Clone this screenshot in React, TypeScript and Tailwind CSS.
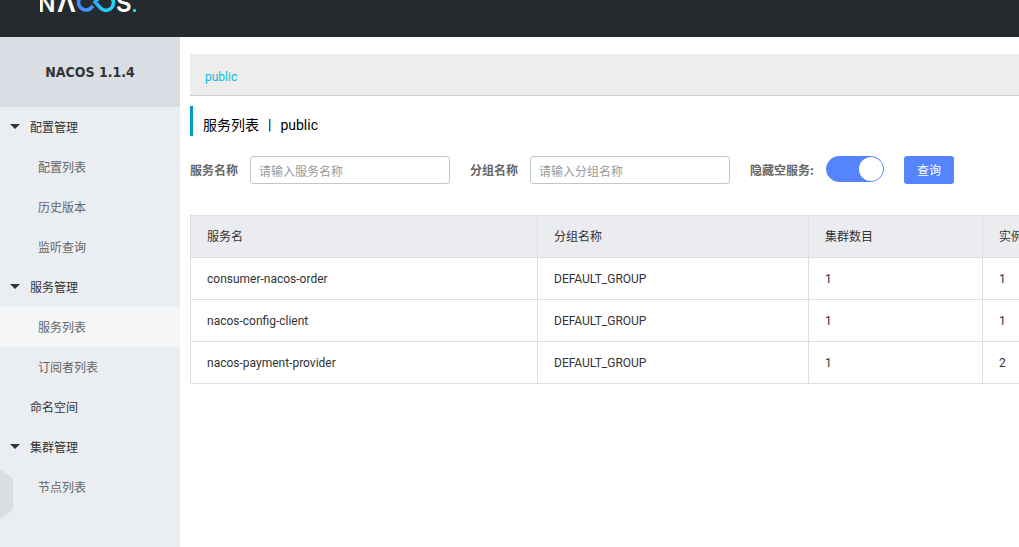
import React, { useState } from 'react';

type MenuItem = {
  title: string;
  children?: string[];
};

const menu: MenuItem[] = [
  { title: '配置管理', children: ['配置列表', '历史版本', '监听查询'] },
  { title: '服务管理', children: ['服务列表', '订阅者列表'] },
  { title: '命名空间' },
  { title: '集群管理', children: ['节点列表'] },
];

const services = [
  { name: 'consumer-nacos-order', groupName: 'DEFAULT_GROUP', clusterCount: 1, ipCount: 1 },
  { name: 'nacos-config-client', groupName: 'DEFAULT_GROUP', clusterCount: 1, ipCount: 1 },
  { name: 'nacos-payment-provider', groupName: 'DEFAULT_GROUP', clusterCount: 1, ipCount: 2 },
];

const Logo = () => (
  <svg width="100" height="14" viewBox="0 0 100 14" role="img" aria-label="NACOS">
    <defs>
      <linearGradient id="loop" gradientUnits="userSpaceOnUse" x1="36" y1="0" x2="76" y2="0">
        <stop offset="0" stopColor="#4788ff" />
        <stop offset="0.45" stopColor="#3b9cff" />
        <stop offset="0.6" stopColor="#22c4f5" />
        <stop offset="1" stopColor="#1be0f5" />
      </linearGradient>
    </defs>
    <g fill="#fff" fontFamily="Inter, sans-serif" fontWeight="600">
      <text x="-2" y="12" fontSize="23">N</text>
      <text x="17" y="12" fontSize="26">Λ</text>
      <text x="76" y="12" fontSize="24">S</text>
    </g>
    <g fill="none" stroke="url(#loop)" strokeWidth="3.6">
      <path d="M53 6 L50.500 8.500 A7.500 7.500 0 1 1 50.500 -3.500 L52 -2" />
      <path d="M61 -4.500 L55 2 L60.500 8 A7.500 7.500 0 1 0 62 -3.500" />
    </g>
    <rect x="93" y="9" width="3" height="3" rx="1" fill="#1be0f5" />
  </svg>
);

const Sidebar = () => (
  <aside className="relative w-[180px] shrink-0 bg-[#eaedf1] font-['Noto_Sans_CJK_SC',sans-serif]">
    <h1 className="flex h-[70px] items-center justify-center bg-[#d9dde4] font-['DejaVu_Sans_Condensed','DejaVu_Sans',sans-serif] text-sm font-bold text-[#333]">
      NACOS 1.1.4
    </h1>
    <nav>
      <ul>
        {menu.map((item) => (
          <li key={item.title}>
            <a href="#" className="flex h-10 items-center pl-2.5 text-[#333]">
              <span className="w-5">
                {item.children && (
                  <svg width="10" height="5" viewBox="0 0 10 5" className="mb-0.5" aria-hidden="true">
                    <path d="M0 0H10L5 5Z" fill="#333" />
                  </svg>
                )}
              </span>
              {item.title}
            </a>
            {item.children && (
              <ul>
                {item.children.map((child) => (
                  <li key={child}>
                    <a
                      href="#"
                      className={`flex h-10 items-center pl-[38px] text-[#666] ${
                        child === '服务列表' ? 'bg-[#f4f6f8]' : ''
                      }`}
                    >
                      {child}
                    </a>
                  </li>
                ))}
              </ul>
            )}
          </li>
        ))}
      </ul>
    </nav>
    {/* Collapse handle */}
    <button type="button" aria-label="收起" className="absolute bottom-7 left-0">
      <svg width="13" height="50" viewBox="0 0 13 50">
        <path d="M0 0L13 9V41L0 50Z" fill="#d9dde4" />
      </svg>
    </button>
  </aside>
);

const inputClass =
  'h-7 w-[200px] rounded-[3px] border border-[#c4c6cf] bg-white px-2 text-[#333] outline-none placeholder:text-[#999]';
const cellClass = 'h-[42px] border border-[#dcdee3] px-4 text-left font-normal whitespace-nowrap';

const App = () => {
  const [hideEmpty, setHideEmpty] = useState(true);

  return (
    <div className="flex min-h-screen flex-col overflow-hidden bg-white font-['Roboto','Noto_Sans_CJK_SC',sans-serif] text-xs text-[#333]">
      <header className="h-[37px] shrink-0 bg-[#252a2f] pl-10">
        <Logo />
      </header>

      <div className="flex grow">
        <Sidebar />

        <main className="min-w-0 grow overflow-hidden pt-[17px] pl-2.5">
          <div className="flex h-[42px] items-center border-b border-[#ccc] bg-[#ededed] pt-1 pl-[15px]">
            <a href="#" className="text-[#00c1de]">public</a>
          </div>

          <h2 className="mt-2.5 flex h-[30px] items-center gap-[9px] border-l-[3px] border-[#09c] pt-2 pl-2.5 text-sm text-black">
            <span>服务列表</span>
            <span>|</span>
            <span>public</span>
          </h2>

          <form
            className="mt-5 flex gap-5 font-['Noto_Sans_CJK_SC',sans-serif]"
            onSubmit={(e) => e.preventDefault()}
          >
            <div className="flex shrink-0 items-center gap-3">
              <label htmlFor="serviceName" className="font-bold text-[#666]">服务名称</label>
              <input id="serviceName" placeholder="请输入服务名称" className={inputClass} />
            </div>
            <div className="flex shrink-0 items-center gap-3">
              <label htmlFor="groupName" className="font-bold text-[#666]">分组名称</label>
              <input id="groupName" placeholder="请输入分组名称" className={inputClass} />
            </div>
            <div className="flex shrink-0 items-start gap-3">
              <label htmlFor="hideEmpty" className="w-16 leading-7 font-bold whitespace-nowrap text-[#666]">
                隐藏空服务:
              </label>
              <input
                id="hideEmpty"
                type="checkbox"
                role="switch"
                checked={hideEmpty}
                onChange={(e) => setHideEmpty(e.target.checked)}
                className="flex h-[26px] w-[58px] appearance-none rounded-full border border-[#c4c6cf] bg-[#c4c6cf] before:size-6 before:rounded-full before:bg-white checked:justify-end checked:border-[#5584ff] checked:bg-[#5584ff]"
              />
            </div>
            <button type="submit" className="h-7 shrink-0 rounded-[3px] bg-[#5584ff] px-[13px] text-white">
              查询
            </button>
          </form>

          <table className="mt-[31px] w-full min-w-[1000px] table-fixed border-collapse">
            <colgroup>
              <col className="w-[347px]" />
              <col className="w-[271px]" />
              <col className="w-[174px]" />
              <col />
            </colgroup>
            <thead>
              <tr className="bg-[#ebecf0]">
                <th className={cellClass}>服务名</th>
                <th className={cellClass}>分组名称</th>
                <th className={cellClass}>集群数目</th>
                <th className={cellClass}>实例数</th>
              </tr>
            </thead>
            <tbody>
              {services.map((service) => (
                <tr key={service.name}>
                  <td className={cellClass}>{service.name}</td>
                  <td className={cellClass}>{service.groupName}</td>
                  <td className={cellClass}>{service.clusterCount}</td>
                  <td className={cellClass}>{service.ipCount}</td>
                </tr>
              ))}
            </tbody>
          </table>
        </main>
      </div>
    </div>
  );
};

export default App;
